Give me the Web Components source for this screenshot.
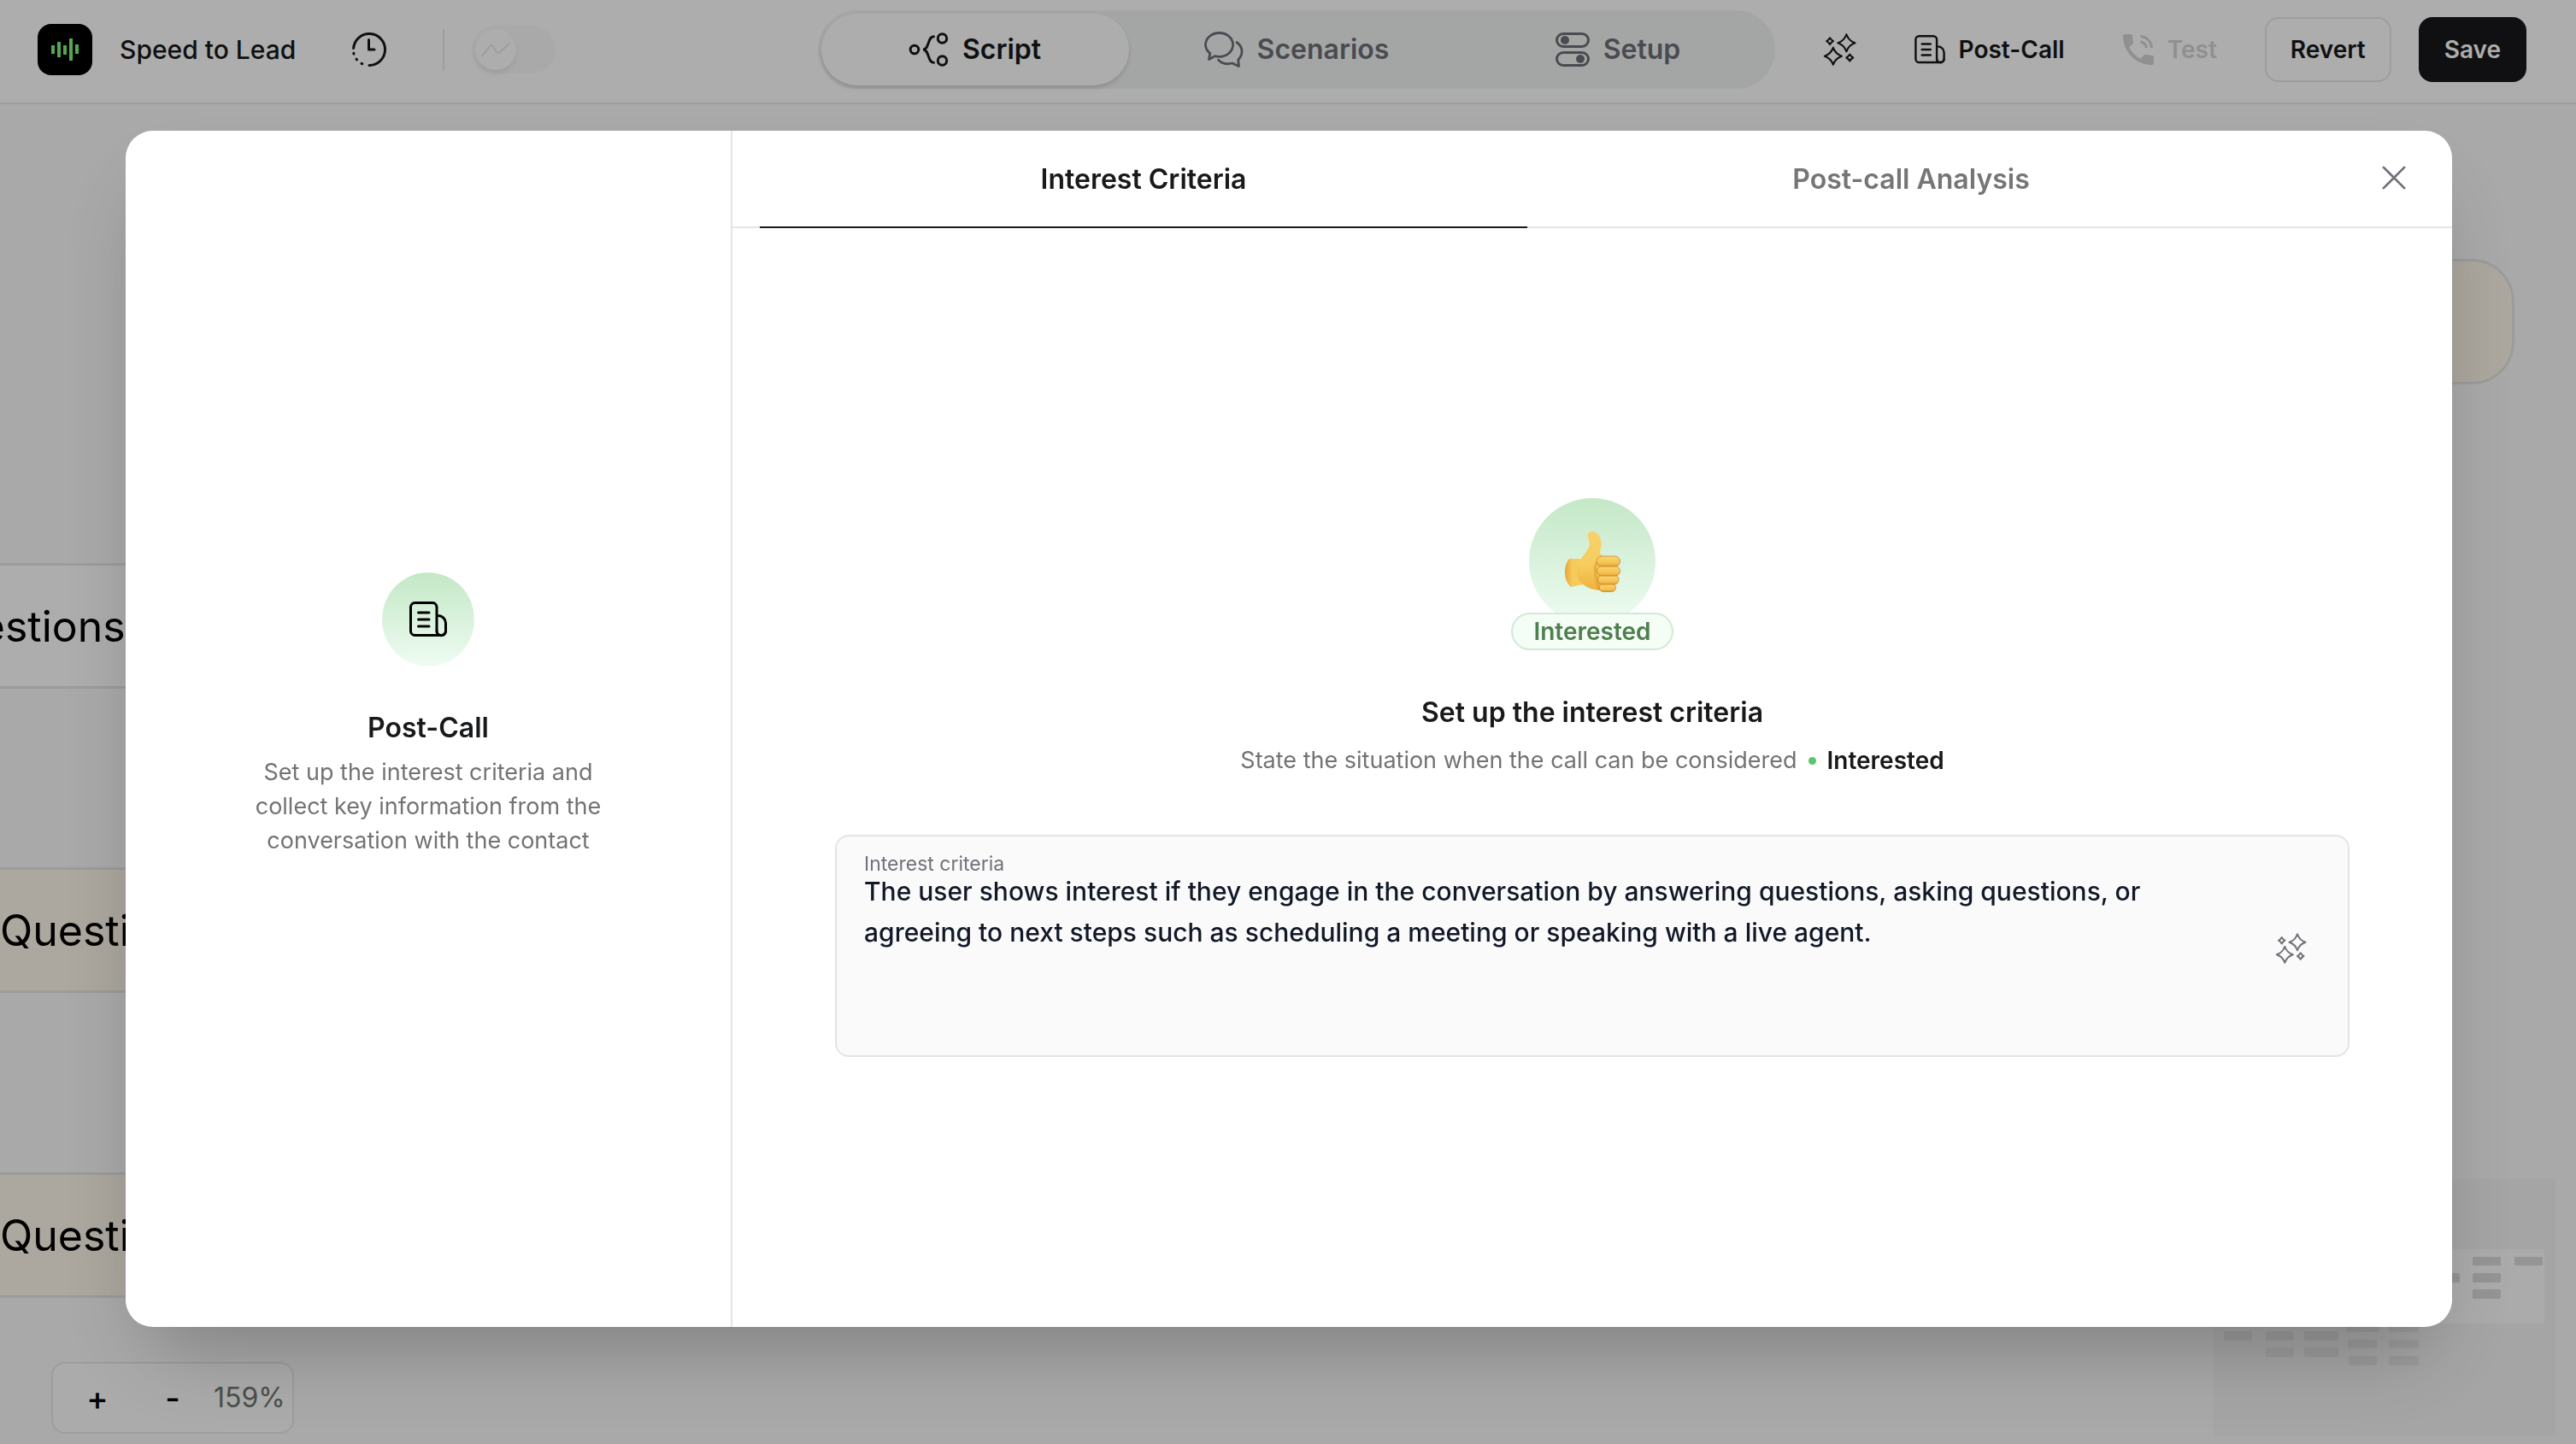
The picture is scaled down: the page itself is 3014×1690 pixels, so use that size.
<!DOCTYPE html>
<html lang="en">
<head>
<meta charset="utf-8">
<title>Speed to Lead</title>
<style>
  html, body { margin: 0; height: 100%; }
  body { font-family: Inter, "Liberation Sans", sans-serif; color: #18191b; background: #fafafa; overflow: hidden; }
</style>
</head>
<body>
<agent-editor></agent-editor>
<script>
const star = (x, y, r, k) =>
  `M${x} ${y - r}Q${x + k} ${y - k} ${x + r} ${y}Q${x + k} ${y + k} ${x} ${y + r}Q${x - k} ${y + k} ${x - r} ${y}Q${x - k} ${y - k} ${x} ${y - r}Z`;

const ICONS = {
  logo: [64, 60, `<rect width="64" height="60" rx="16" fill="#000"/><g fill="#7bf777"><rect x="16" y="25" width="4" height="10"/><rect x="23" y="21" width="4" height="18"/><rect x="30" y="25" width="4" height="11"/><rect x="37" y="17" width="4" height="26"/><rect x="44" y="24" width="4" height="11"/></g>`],
  history: [40, 40, `<g fill="none" stroke="currentColor" stroke-width="3" stroke-linecap="round" stroke-linejoin="round"><path d="M1.6 18.5A18.5 18.5 0 1 1 20 38.5"/><path d="M1.8 24.3l.2.8M5 31.2l.5.7M11 36.3l.8.4"/><path d="M19.5 8.5V20H26"/></g>`],
  trend: [34, 16, `<path d="M1 15.500L10.500 3.800Q12 2 13.500 4L18.500 11Q20 13 21.800 11L33 .8" fill="none" stroke="currentColor" stroke-width="2" stroke-linecap="round"/>`],
  script: [46, 40, `<g fill="none" stroke="currentColor" stroke-width="3" stroke-linecap="round"><circle cx="6" cy="20" r="4.800"/><circle cx="38.500" cy="7" r="5.200"/><circle cx="38.500" cy="33" r="5.200"/><path d="M28.500 4.800C21 4.800 23.500 20 16 20C23.500 20 21 35.200 28.500 35.200"/></g>`],
  chats: [46, 42, `<g fill="none" stroke="currentColor" stroke-width="2.800" stroke-linecap="round" stroke-linejoin="round"><path d="M5.500 32.500L6.800 25.500C3.500 22.800 1.500 19.500 1.500 15.200C1.500 7.600 8.800 1.500 17.600 1.500C26.500 1.500 33.600 7.600 33.600 15.200C33.600 23 26.500 29.300 17.600 29.300C15.800 29.300 14 29 12.500 28.600Z"/><path d="M38 12.500C45.500 18 46 26.500 39.800 32.800L40.500 40.500L32.800 37C26.500 38.500 20 37.200 16.500 33.200"/></g>`],
  toggles: [40, 40, `<g fill="none" stroke="currentColor" stroke-width="3"><rect x="1.500" y="1.500" width="37" height="15" rx="7.500"/><rect x="1.500" y="23.500" width="37" height="15" rx="7.500"/></g><circle cx="11" cy="9" r="5" fill="currentColor"/><circle cx="29" cy="31" r="5" fill="currentColor"/>`],
  sparkles: [36, 36, `<g fill="none" stroke="currentColor" stroke-width="2" stroke-linejoin="round"><path d="${star(25, 10.7, 9.5, 2.4)}${star(10.3, 25.3, 9.5, 2.4)}${star(6.7, 8.7, 3.7, 1.3)}${star(28.7, 27, 3.7, 1.3)}"/></g>`],
  doc: [44, 42, `<g fill="none" stroke="currentColor" stroke-width="3" stroke-linecap="round" stroke-linejoin="round"><path d="M37.300 39.500H6.500a5 5 0 0 1-5-5V6.500a5 5 0 0 1 5-5H27a5 5 0 0 1 5 5V34.500a5 5 0 0 0 10.500 0V25.500a9 9 0 0 0-9-9H32"/><path d="M32 34.500a5 5 0 0 0 5 5a5 5 0 0 0 5.500-5M10.500 13H23M10.500 21H23M10.500 29H23"/></g>`],
  phone: [36, 36, `<g transform="translate(-6 -6) scale(2)" fill="currentColor"><path d="M20 15.500c-1.250 0-2.450-.2-3.570-.57-.1-.03-.21-.05-.31-.05-.26 0-.51.1-.71.29l-2.200 2.200c-2.830-1.440-5.150-3.750-6.590-6.580l2.200-2.210c.28-.27.36-.66.25-1.010C8.700 6.450 8.500 5.250 8.500 4c0-.55-.45-1-1-1H4c-.55 0-1 .45-1 1 0 9.390 7.610 17 17 17 .55 0 1-.45 1-1v-3.500c0-.55-.45-1-1-1z"/></g><g fill="none" stroke="currentColor" stroke-width="3"><path d="M20.500 2.500C28 3.500 33 8.500 33.500 16M20.500 9C24.500 9.700 27 12.200 27.500 16"/></g>`],
  close: [30, 30, `<path d="M2 2L28 28M28 2L2 28" fill="none" stroke="currentColor" stroke-width="3" stroke-linecap="round"/>`],
  thumb: [66, 71, `<defs>
    <linearGradient id="h" x1="0" y1="0" x2="0" y2="1"><stop offset="0" stop-color="#f9d06a"/><stop offset=".55" stop-color="#f7cd5f"/><stop offset="1" stop-color="#eeb23c"/></linearGradient>
    <linearGradient id="f" x1="0" y1="0" x2="0" y2="1"><stop offset="0" stop-color="#fad672"/><stop offset=".7" stop-color="#f5c150"/><stop offset="1" stop-color="#e39f33"/></linearGradient>
    <linearGradient id="w" x1="0" y1="0" x2="1" y2="0"><stop offset="0" stop-color="#e5a437"/><stop offset=".4" stop-color="#f6ca5c"/><stop offset="1" stop-color="#f6ca5c"/></linearGradient></defs>
    <path d="M6 32H18L22 62L8 65C-1 57-1 40 6 32Z" fill="url(#w)"/>
    <path d="M16 36C22 29 30 20 30 14C29 8 25 2 31 .500C38-1.500 43 5 43.500 13C44 18 42 22 42 25C43 28 47 29 50 30L56 60L44 69C34 69 25 65 20 60C14 54 13 42 16 36Z" fill="url(#h)"/>
    <path d="M38 36C34 44 38 58 41 68" fill="none" stroke="#dd9c34" stroke-width="3" opacity=".6"/>
    <g fill="url(#f)" stroke="#c9802a" stroke-width=".8"><rect x="41" y="61" width="19.500" height="9.500" rx="4.700"/><rect x="39.500" y="51" width="24.500" height="11" rx="5.500"/><rect x="38.500" y="40.500" width="27" height="11.500" rx="5.700"/><rect x="38" y="29" width="27.500" height="12" rx="6"/></g>`]
};

/* Icon: <ui-icon name="doc" size="36"> — size is the drawn width. */
customElements.define('ui-icon', class extends HTMLElement {
  connectedCallback() {
    const [w, h, body] = ICONS[this.getAttribute('name')];
    const width = +(this.getAttribute('size') || w);
    const root = this.attachShadow({ mode: 'open' });
    root.innerHTML = `<style>:host{display:inline-flex;flex:none}svg{display:block;overflow:visible}</style>
      <svg width="${width}" height="${Math.round(width * h / w)}" viewBox="0 0 ${w} ${h}" aria-hidden="true">${body}</svg>`;
  }
});

const define = (tag, html) => {
  const template = document.createElement('template');
  template.innerHTML = html;
  customElements.define(tag, class extends HTMLElement {
    constructor() {
      super();
      this.attachShadow({ mode: 'open' }).append(template.content.cloneNode(true));
    }
  });
};

define('ui-button', `<style>
  :host { display: inline-flex; }
  button { font: 600 28px/40px Inter, sans-serif; color: #18191b; background: none; border: 2px solid transparent; border-radius: 16px;
    height: 76px; padding: 0 28px; display: flex; align-items: center; gap: 16px; }
  :host([kind=ghost]) button { padding: 0 24px; border: 0; }
  :host([kind=outline]) button { border-color: #e7e7e7; }
  :host([kind=solid]) button { background: #18191b; color: #fff; border-color: #18191b; }
  :host([kind=icon]) button { padding: 0 34px; border: 0; }
  :host([muted]) button { color: #d3d4d5; }
</style><button type="button"><slot></slot></button>`);

define('beta-switch', `<style>
  :host { display: block; }
  label { display: grid; width: 98px; height: 56px; align-items: center; }
  input, span { grid-area: 1 / 1; }
  input { appearance: none; margin: 0; width: 98px; height: 56px; border-radius: 28px; background: #fafafa; }
  span { width: 48px; height: 48px; margin-left: 4px; border-radius: 50%; background: #fff; box-shadow: 0 4px 6px rgba(0,0,0,.08);
    display: flex; align-items: center; justify-content: center; color: #e4eae7; }
</style><label><input type="checkbox" aria-label="Analytics" disabled><span><ui-icon name="trend"></ui-icon></span></label>`);

define('mode-tab', `<style>
  :host { display: flex; flex: 0 0 360px; }
  button { flex: 1; height: 84px; border: 0; border-radius: 42px; background: none; color: #6e6f78; font: 600 32px/48px Inter, sans-serif;
    display: flex; align-items: center; justify-content: center; gap: 16px; padding: 0; }
  :host([active]) button { background: #fff; color: #18191b; box-shadow: 0 3px 5px rgba(0,0,0,.14); }
</style><button type="button"><slot></slot></button>`);

define('top-bar', `<style>
  :host { display: grid; grid-template-columns: 1fr auto 1fr; align-items: center; height: 116px; padding: 0 24px 4px 44px;
    background: #fff; border-bottom: 2px solid #e9e9e9; }
  .left, .right, .links { display: flex; align-items: center; }
  .left { gap: 32px; }
  .name { font-size: 30px; line-height: 48px; font-weight: 500; }
  .line { width: 2px; height: 48px; background: #e7e7e7; }
  nav { display: flex; gap: 16px; padding: 4px; border-radius: 46px; background: #f2f5f3; }
  .right { justify-content: flex-end; gap: 32px; margin-right: 34px; }
  .links { gap: 20px; }
</style>
<div class="left"><ui-icon name="logo"></ui-icon><span class="name">Speed to Lead</span>
  <ui-button kind="icon"><ui-icon name="history"></ui-icon></ui-button><span class="line"></span><beta-switch></beta-switch></div>
<nav>
  <mode-tab active><ui-icon name="script"></ui-icon>Script</mode-tab>
  <mode-tab><ui-icon name="chats"></ui-icon>Scenarios</mode-tab>
  <mode-tab><ui-icon name="toggles"></ui-icon>Setup</mode-tab>
</nav>
<div class="right">
  <div class="links">
    <ui-button kind="ghost"><ui-icon name="sparkles" size="38"></ui-icon></ui-button>
    <ui-button kind="ghost"><ui-icon name="doc" size="36"></ui-icon>Post-Call</ui-button>
    <ui-button kind="ghost" muted><ui-icon name="phone"></ui-icon>Test</ui-button>
  </div>
  <ui-button kind="outline">Revert</ui-button><ui-button kind="solid">Save</ui-button>
</div>`);

/* Canvas node; its place on the canvas comes from the inline style. */
define('flow-node', `<style>
  :host { position: absolute; box-sizing: border-box; height: 147px; width: 660px; padding-left: 100px; border: 3px solid #e4e7e5; border-radius: 50px;
    background: #fef6ea; display: flex; align-items: center; font-size: 50px; line-height: 64px; color: #000; white-space: nowrap; }
  :host([plain]) { background: #fff; }
</style><slot></slot>`);

define('zoom-control', `<style>
  :host { position: absolute; left: 60px; bottom: 12px; box-sizing: border-box; height: 84px; display: flex; align-items: center;
    border: 2px solid #e7e7e7; border-radius: 16px; background: #fdfdfd; padding: 0 8px; }
  button { width: 88px; height: 72px; padding: 0; border: 0; background: none; color: #000; font: 500 38px/48px Inter, sans-serif; }
  output { font-size: 32px; line-height: 48px; color: #6c766f; margin-left: 4px; }
</style><button type="button" aria-label="Zoom in">+</button><button type="button" aria-label="Zoom out">-</button><output>159%</output>`);

define('mini-map', `<style>:host { position: absolute; right: 24px; bottom: 10px; } svg { display: block; }</style>
<svg width="400" height="300" aria-hidden="true"><rect width="400" height="300" fill="#f4f4f4"/>
<rect x="180" y="82" width="207" height="87" fill="#fdfdfd"/>
<g fill="#dcdcdc"><rect x="255" y="110" width="33" height="11" rx="2"/><rect x="303" y="91" width="33" height="10"/><rect x="352" y="91" width="33" height="10" rx="1"/><rect x="303" y="110" width="33" height="11" rx="2"/><rect x="303" y="129" width="33" height="11" rx="2"/></g>
<g fill="#e6e6e6"><rect x="12" y="178" width="33" height="11" rx="2"/><rect x="61" y="178" width="33" height="11" rx="2"/><rect x="61" y="197" width="33" height="11" rx="2"/><rect x="106" y="178" width="40" height="11" rx="2"/><rect x="106" y="197" width="40" height="11" rx="2"/><rect x="155" y="169" width="39" height="10"/><rect x="157" y="188" width="34" height="10"/><rect x="158" y="207" width="33" height="11" rx="2"/><rect x="205" y="169" width="35" height="10"/><rect x="205" y="188" width="35" height="10"/><rect x="205" y="207" width="35" height="11" rx="2"/></g></svg>`);

define('flow-canvas', `<style>:host { display: block; position: relative; overflow: hidden; background: #fafafa; }</style>
<flow-node plain style="left:-194px;top:537px">Questions</flow-node>
<flow-node style="left:-103px;top:893px">Questions</flow-node>
<flow-node style="left:-103px;top:1250px">Questions</flow-node>
<flow-node style="left:2282px;top:181px"></flow-node>
<zoom-control></zoom-control><mini-map></mini-map>`);

define('modal-tab', `<style>
  :host { display: flex; flex: 1; }
  button { flex: 1; padding: 0; border: solid transparent; border-width: 2px 0; background: none; font: 600 32px/48px Inter, sans-serif; color: #757575; }
  :host([active]) button { color: #18191b; border-bottom-color: #18191b; }
</style><button type="button" role="tab"><slot></slot></button>`);

define('modal-intro', `<style>
  :host { display: flex; flex-direction: column; align-items: center; justify-content: center; box-sizing: border-box; width: 710px;
    padding: 0 140px 32px; border-right: 2px solid #e4e4e7; text-align: center; }
  .disc { width: 108px; height: 110px; border-radius: 50%; display: flex; align-items: center; justify-content: center;
    background: linear-gradient(#c4e8c6, #effcf3); color: #000; }
  h2 { margin: 48px 0 8px; font-size: 32px; line-height: 48px; font-weight: 600; }
  p { margin: 0; font-size: 27px; line-height: 40px; color: #737373; }
</style><div class="disc"><ui-icon name="doc"></ui-icon></div><h2>Post-Call</h2>
<p>Set up the interest criteria and collect key information from the conversation with the contact</p>`);

define('criteria-field', `<style>
  :host { display: block; align-self: stretch; }
  .box { display: flex; box-sizing: border-box; height: 260px; border: 2px solid #e4e4e4; border-radius: 16px; background: #fafafa; padding: 20px 32px 12px; }
  .col { flex: 1; display: flex; flex-direction: column; }
  label { font-size: 23px; line-height: 24px; margin-bottom: -4px; color: #71717a; }
  textarea { flex: 1; border: 0; padding: 0; margin: 0; resize: none; outline: 0; background: none; color: #111827; font: 500 30px/48px Inter, sans-serif; overflow: hidden; }
  button { align-self: center; margin-left: 60px; padding: 16px; border: 0; background: none; color: #71717a; }
</style>
<div class="box"><div class="col"><label for="criteria">Interest criteria</label>
<textarea id="criteria">The user shows interest if they engage in the conversation by answering questions, asking questions, or agreeing to next steps such as scheduling a meeting or speaking with a live agent.</textarea></div>
<button type="button" aria-label="Improve with AI"><ui-icon name="sparkles"></ui-icon></button></div>`);

define('criteria-panel', `<style>
  :host { flex: 1; display: flex; flex-direction: column; align-items: center; justify-content: center; padding: 0 120px; }
  .badge { display: flex; flex-direction: column; align-items: center; }
  .disc { width: 148px; height: 148px; border-radius: 50%; display: flex; align-items: center; justify-content: center; background: linear-gradient(#c4e8c6, #effcf3); }
  .pill { margin-top: -14px; box-sizing: border-box; height: 44px; padding: 0 24px; border: 2px solid #d3e8d5; border-radius: 22px; background: #f4fdf6;
    font-size: 28px; line-height: 40px; font-weight: 600; color: #4f7f4f; }
  h2 { margin: 49px 0 12px; font-size: 32px; line-height: 48px; font-weight: 600; }
  p { margin: 0 0 67px; display: flex; align-items: center; gap: 13px; font-size: 27px; line-height: 40px; color: #737373; }
  i { width: 9px; height: 9px; border-radius: 50%; background: #5ec46a; }
  b { font-size: 28px; font-weight: 600; color: #18191b; }
</style>
<div class="badge"><div class="disc"><ui-icon name="thumb"></ui-icon></div><span class="pill">Interested</span></div>
<h2>Set up the interest criteria</h2>
<p><span>State the situation when the call can be considered</span><i></i><b>Interested</b></p>
<criteria-field></criteria-field>`);

define('post-call-modal', `<style>
  :host { position: fixed; inset: 0; display: flex; padding: 153px 145px 137px 147px; background: rgba(0,0,0,.32); }
  section { flex: 1; display: flex; overflow: hidden; border-radius: 32px; background: #fff; }
  .shade { flex: 1; display: flex; border-radius: 32px; box-shadow: 0 50px 100px -24px rgba(0,0,0,.25); }
  .main { flex: 1; display: flex; flex-direction: column; }
  header { display: flex; height: 114px; box-sizing: border-box; padding: 0 24px 0 32px; border-bottom: 2px solid #e5e5ec; }
  .tabs { flex: 1; display: flex; margin-bottom: -2px; }
  .close { align-self: center; margin-left: 72px; padding: 30px; border: 0; background: none; color: #71717a; }
</style>
<div class="shade"><section role="dialog" aria-label="Post-Call"><modal-intro></modal-intro>
<div class="main"><header><div class="tabs" role="tablist"><modal-tab active>Interest Criteria</modal-tab><modal-tab>Post-call Analysis</modal-tab></div>
<button class="close" type="button" aria-label="Close"><ui-icon name="close" size="28"></ui-icon></button></header>
<criteria-panel></criteria-panel></div></section></div>`);

define('agent-editor', `<style>:host { display: grid; grid-template-rows: auto 1fr; height: 100vh; }</style>
<top-bar></top-bar><flow-canvas></flow-canvas><post-call-modal></post-call-modal>`);
</script>
</body>
</html>
